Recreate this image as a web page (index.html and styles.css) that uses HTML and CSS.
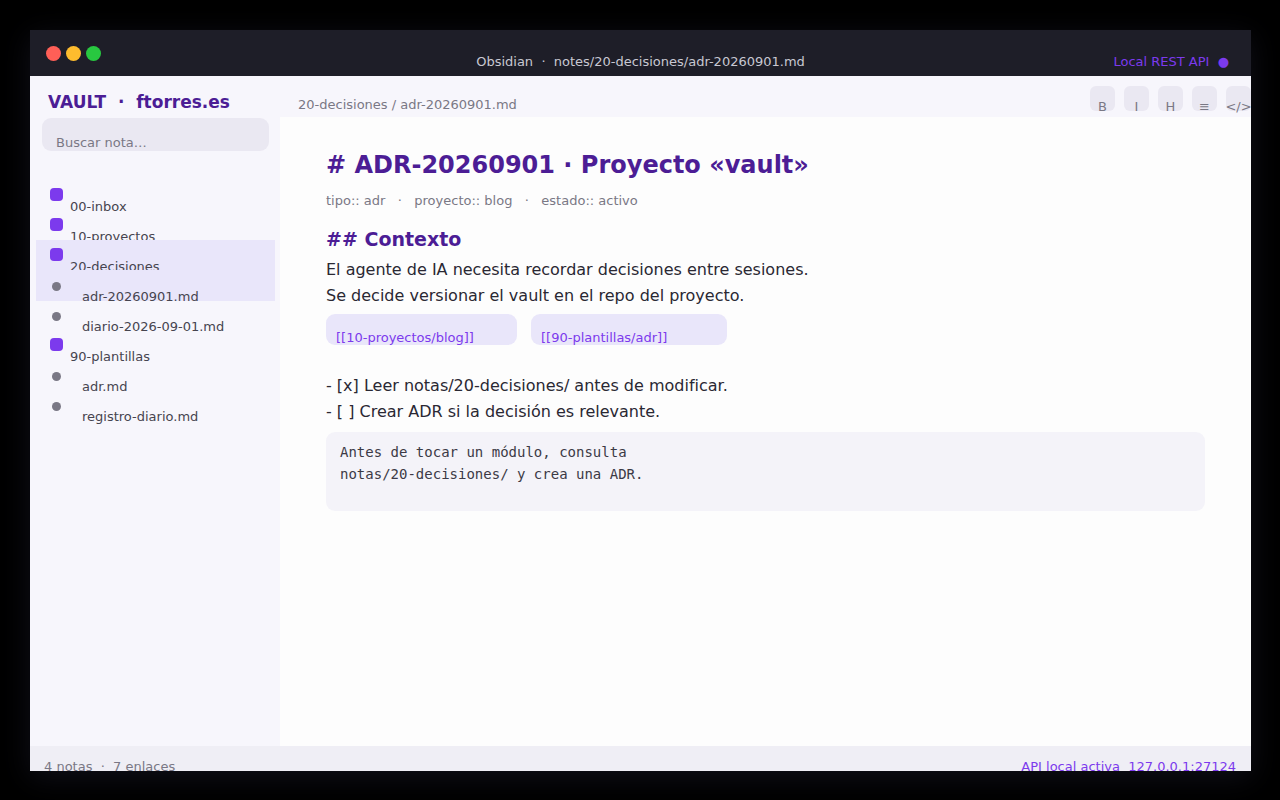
FILE: index.html
```html
<!DOCTYPE html>
<html lang="es">
<head>
<meta charset="utf-8">
<meta name="viewport" content="width=device-width, initial-scale=1">
<title>Obsidian · adr-20260901.md</title>
<link rel="stylesheet" href="styles.css">
</head>
<body>
<div class="window">
  <header class="titlebar">
    <div class="lights">
      <span class="light light-close"></span>
      <span class="light light-min"></span>
      <span class="light light-max"></span>
    </div>
    <div class="titlebar-title">Obsidian&nbsp; ·&nbsp; notes/20-decisiones/adr-20260901.md</div>
    <div class="titlebar-status">Local REST API&nbsp; ●</div>
  </header>

  <div class="workspace">
    <aside class="sidebar">
      <div class="vault-name">VAULT&nbsp; ·&nbsp; ftorres.es</div>
      <input class="search" type="text" placeholder="Buscar nota…" aria-label="Buscar nota">
      <nav class="tree">
        <a class="row" href="#"><span class="folder-icon"></span><span class="label">00-inbox</span></a>
        <a class="row" href="#"><span class="folder-icon"></span><span class="label">10-proyectos</span></a>
        <a class="row row-active" href="#"><span class="folder-icon"></span><span class="label">20-decisiones</span></a>
        <a class="row row-active" href="#"><span class="file-icon"></span><span class="label">adr-20260901.md</span></a>
        <a class="row" href="#"><span class="file-icon"></span><span class="label">diario-2026-09-01.md</span></a>
        <a class="row" href="#"><span class="folder-icon"></span><span class="label">90-plantillas</span></a>
        <a class="row" href="#"><span class="file-icon"></span><span class="label">adr.md</span></a>
        <a class="row" href="#"><span class="file-icon"></span><span class="label">registro-diario.md</span></a>
      </nav>
    </aside>

    <main class="editor">
      <div class="toolbar">
        <div class="breadcrumb">20-decisiones / adr-20260901.md</div>
        <div class="tools">
          <button class="tool" type="button">B</button>
          <button class="tool" type="button">I</button>
          <button class="tool" type="button">H</button>
          <button class="tool" type="button">≡</button>
          <button class="tool" type="button">&lt;/&gt;</button>
        </div>
      </div>
      <article class="note">
        <h1 class="note-title"># ADR-20260901 · Proyecto «vault»</h1>
        <p class="note-meta">tipo:: adr&nbsp;&nbsp; ·&nbsp;&nbsp; proyecto:: blog&nbsp;&nbsp; ·&nbsp;&nbsp; estado:: activo</p>
        <h2 class="note-heading">## Contexto</h2>
        <p class="note-text">El agente de IA necesita recordar decisiones entre sesiones.<br>Se decide versionar el vault en el repo del proyecto.</p>
        <div class="links">
          <a class="chip chip-project" href="#">[[10-proyectos/blog]]</a>
          <a class="chip chip-template" href="#">[[90-plantillas/adr]]</a>
        </div>
        <ul class="tasks">
          <li>- [x] Leer notas/20-decisiones/ antes de modificar.</li>
          <li>- [ ] Crear ADR si la decisión es relevante.</li>
        </ul>
        <pre class="code">Antes de tocar un módulo, consulta
notas/20-decisiones/ y crea una ADR.</pre>
      </article>
    </main>
  </div>

  <footer class="statusbar">
    <span>4 notas&nbsp; ·&nbsp; 7 enlaces</span>
    <span class="statusbar-api">API local activa&nbsp; 127.0.0.1:27124</span>
  </footer>
</div>
</body>
</html>
```

FILE: styles.css
```css
* {
  box-sizing: border-box;
}

body {
  display: flex;
  min-height: 100vh;
  margin: 0;
  padding: 30px 29px 29px 30px;
  background: #000;
  font: 13px/16px "DejaVu Sans", sans-serif;
  color: #7a7885;
}

.window {
  display: flex;
  flex: 1;
  flex-direction: column;
  min-width: 0;
  overflow: hidden;
  background: #fdfdfd;
  box-shadow: 0 6px 28px rgba(30, 30, 46, 0.55);
}

.titlebar {
  display: grid;
  grid-template-columns: 1fr auto 1fr;
  align-items: start;
  height: 46px;
  background: #1e1e28;
}

.lights {
  display: flex;
  gap: 5px;
  padding: 16px 0 0 16px;
}

.light {
  width: 15px;
  height: 15px;
  border-radius: 50%;
}

.light-close { background: #ff5f57; }
.light-min { background: #febc2e; }
.light-max { background: #28c840; }

.titlebar-title {
  padding-top: 24px;
  color: #c8c8d2;
}

.titlebar-status {
  padding: 24px 22px 0 0;
  color: #7c3aed;
  text-align: right;
}

.workspace {
  display: flex;
  flex: 1;
}

.sidebar {
  display: flex;
  flex: none;
  flex-direction: column;
  width: 250px;
  background: #f7f6fc;
}

.vault-name {
  padding: 16px 18px 6px;
  font-size: 17px;
  font-weight: bold;
  line-height: 20px;
  color: #4c1d95;
}

.search {
  height: 33px;
  margin: 0 11px 29px 12px;
  padding: 16px 14px 0;
  border: 0;
  border-radius: 9px;
  background: #eae8f2;
  font: inherit;
  color: #7a7885;
}

.search::placeholder {
  color: #7a7885;
  opacity: 1;
}

.tree {
  display: flex;
  flex-direction: column;
  padding: 0 5px 0 6px;
}

.row {
  display: flex;
  align-items: flex-start;
  height: 30px;
  padding-left: 14px;
  color: #46444f;
  text-decoration: none;
}

.row-active {
  height: 31px;
  margin-bottom: -1px;
  background: #e9e6fa;
}

.label {
  padding-top: 19px;
}

.folder-icon {
  width: 13px;
  height: 13px;
  margin: 8px 7px 0 0;
  border-radius: 4px;
  background: #7c3aed;
}

.file-icon {
  width: 9px;
  height: 9px;
  margin: 12px 21px 0 2px;
  border-radius: 50%;
  background: #7a7885;
}

.editor {
  flex: 1;
  min-width: 0;
}

.toolbar {
  display: flex;
  justify-content: space-between;
  height: 41px;
  padding-left: 18px;
  background: #f7f6fc;
}

.breadcrumb {
  padding-top: 21px;
}

.tools {
  display: flex;
  gap: 9px;
  padding-top: 10px;
}

.tool {
  display: flex;
  justify-content: center;
  width: 25px;
  height: 25px;
  padding: 13px 0 0;
  border: 0;
  border-radius: 6px;
  background: #eae8f2;
  font: inherit;
  color: #7a7885;
}

.note {
  padding: 34px 46px;
}

.note-title {
  margin: 0 0 14px;
  font-size: 24px;
  line-height: 28px;
  color: #4c1d95;
}

.note-meta {
  margin: 0 0 18px;
}

.note-heading {
  margin: 0 0 6px;
  font-size: 19px;
  line-height: 24px;
  color: #4c1d95;
}

.note-text,
.tasks {
  margin: 0;
  font-size: 16px;
  line-height: 26px;
  color: #2a2833;
}

.links {
  display: flex;
  gap: 14px;
  margin: 5px 0 28px;
}

.chip {
  height: 31px;
  padding: 16px 10px 0;
  border-radius: 9px;
  background: #e9e6fa;
  color: #7c3aed;
  text-decoration: none;
}

.chip-project { width: 191px; }
.chip-template { width: 196px; }

.tasks {
  padding: 0;
  list-style: none;
}

.code {
  min-height: 79px;
  margin: 7px 0 0;
  padding: 9px 14px;
  border-radius: 9px;
  background: #f4f3f9;
  font: 14px/22px "DejaVu Sans Mono", monospace;
  color: #3c3a46;
}

.statusbar {
  display: flex;
  justify-content: space-between;
  height: 25px;
  padding: 13px 15px 0 14px;
  background: #efeef5;
}

.statusbar-api {
  color: #7c3aed;
}
```
